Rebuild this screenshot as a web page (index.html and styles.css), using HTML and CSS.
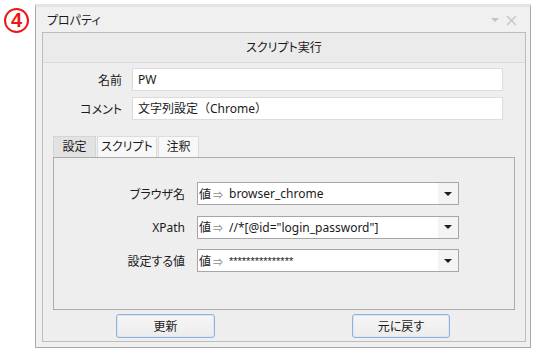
FILE: index.html
```html
<!DOCTYPE html>
<html lang="ja">
<head>
<meta charset="UTF-8">
<title>プロパティ</title>
<link rel="stylesheet" href="styles.css">
</head>
<body>
<div class="page">
  <div class="badge">4</div>

  <div class="dialog">
    <div class="titlebar">
      <span class="title">プロパティ</span>
      <span class="tb-icons">
        <svg width="8" height="6" viewBox="0 0 8 6"><path d="M0 1h8L4 5z" fill="#c4c4c4"/></svg>
        <svg width="11" height="11" viewBox="0 0 11 11"><path d="M1 1l9 9M10 1l-9 9" stroke="#c4c4c4" stroke-width="1.3"/></svg>
      </span>
    </div>

    <div class="panel">
      <div class="panel-head">スクリプト実行</div>

      <div class="fields">
        <div class="field-row">
          <label>名前</label>
          <div class="textbox">PW</div>
        </div>
        <div class="field-row">
          <label>コメント</label>
          <div class="textbox">文字列設定（Chrome）</div>
        </div>
      </div>

      <div class="tabs">
        <div class="tab tab-active">設定</div>
        <div class="tab tab-script">スクリプト</div>
        <div class="tab tab-note">注釈</div>
      </div>

      <div class="tab-panel">
        <div class="param-row">
          <span class="param-label">ブラウザ名</span>
          <div class="combo">
            <span class="combo-kind">値<span class="arrow">⇒</span></span>
            <span class="combo-value">browser_chrome</span>
            <span class="combo-drop"><i></i></span>
          </div>
        </div>
        <div class="param-row">
          <span class="param-label">XPath</span>
          <div class="combo">
            <span class="combo-kind">値<span class="arrow">⇒</span></span>
            <span class="combo-value">//*[@id="login_password"]</span>
            <span class="combo-drop"><i></i></span>
          </div>
        </div>
        <div class="param-row">
          <span class="param-label">設定する値</span>
          <div class="combo">
            <span class="combo-kind">値<span class="arrow">⇒</span></span>
            <span class="combo-value masked">***************</span>
            <span class="combo-drop"><i></i></span>
          </div>
        </div>
      </div>

      <div class="buttons">
        <button type="button" class="btn btn-update">更新</button>
        <button type="button" class="btn btn-revert">元に戻す</button>
      </div>
    </div>
  </div>
</div>
</body>
</html>
```

FILE: styles.css
```css
body {
    margin: 0;
    background-color: #ffffff;
    font-family: "Noto Sans", "Noto Sans CJK JP", sans-serif;
    font-size: 12px;
    color: #1a1a1a;
    font-feature-settings: "palt";
}

.page {
    display: flex;
    align-items: flex-start;
    padding: 4px 0 0 4px;
    width: 537px;
    height: 356px;
    box-sizing: border-box;
    overflow: hidden;
}

/* 注記の丸数字 */
.badge {
    width: 25px;
    height: 25px;
    margin-top: 4px;
    margin-right: 6px;
    box-sizing: border-box;
    border: 2px solid #f01414;
    border-radius: 50%;
    color: #f01414;
    font-family: "Liberation Sans", sans-serif;
    font-weight: bold;
    font-size: 20px;
    line-height: 21px;
    text-align: center;
}

.dialog {
    width: 496px;
    height: 344px;
    box-sizing: border-box;
    background-color: #f0f0f0;
    border: 1px solid #a8a8a8;
    border-top: 3px solid #e4e4e4;
    padding: 0 4px 5px 6px;
}

.titlebar {
    height: 25px;
    display: flex;
    align-items: center;
    justify-content: space-between;
    padding: 1px 9px 0 5px;
    box-sizing: border-box;
}

.tb-icons {
    display: flex;
    align-items: center;
    gap: 7px;
}

.panel {
    height: 310px;
    box-sizing: border-box;
    border: 1px solid #bdbdbd;
    background-color: #eeeeee;
    display: flex;
    flex-direction: column;
}

.panel-head {
    height: 30px;
    box-sizing: border-box;
    border-bottom: 1px solid #dadada;
    background-color: #ebebeb;
    display: flex;
    align-items: center;
    justify-content: center;
    padding-bottom: 1px;
}

.fields {
    margin-top: 5px;
    display: flex;
    flex-direction: column;
    gap: 6px;
}

.field-row {
    display: flex;
    align-items: center;
    gap: 10px;
}

.field-row label {
    width: 79px;
    text-align: right;
}

.textbox {
    width: 371px;
    height: 23px;
    box-sizing: border-box;
    background-color: #ffffff;
    border: 1px solid #dcdcdc;
    padding-left: 5px;
    line-height: 21px;
    font-feature-settings: normal;
}

.tabs {
    margin: 16px 0 0 10px;
    height: 21px;
    display: flex;
    gap: 1px;
}

.tab {
    height: 21px;
    box-sizing: border-box;
    border: 1px solid #dcdcdc;
    border-bottom: none;
    background-color: #f8f8f8;
    text-align: center;
    line-height: 20px;
}

.tab-active {
    width: 43px;
    background-color: #e2e2e2;
    border-color: #d4d4d4;
}

.tab-script {
    width: 60px;
}

.tab-note {
    width: 41px;
}

.tab-panel {
    margin: 0 10px;
    height: 153px;
    box-sizing: border-box;
    border: 1px solid #acacac;
    background-color: #eeeeee;
    padding-top: 24px;
    display: flex;
    flex-direction: column;
    gap: 10.5px;
}

.param-row {
    display: flex;
    align-items: center;
    gap: 12px;
}

.param-label {
    width: 131px;
    text-align: right;
}

.combo {
    width: 262px;
    height: 23px;
    box-sizing: border-box;
    background-color: #ffffff;
    border: 1px solid #a6a6a6;
    display: flex;
    align-items: center;
    padding-left: 1px;
}

.combo-kind {
    width: 30px;
    flex-shrink: 0;
}

.combo-kind .arrow {
    color: #8a8a8a;
    font-size: 10px;
    margin-left: 2px;
}

.combo-value {
    flex: 1;
    white-space: nowrap;
    overflow: hidden;
}

.masked {
    font-family: "Liberation Sans", sans-serif;
    font-size: 11px;
}

.combo-drop {
    width: 20px;
    height: 21px;
    background-color: #f4f4f4;
    display: flex;
    align-items: center;
    justify-content: center;
}

.combo-drop i {
    width: 0;
    height: 0;
    border-left: 4px solid transparent;
    border-right: 4px solid transparent;
    border-top: 4px solid #1e1e1e;
}

.buttons {
    margin-top: 4px;
    padding: 0 75px 0 73px;
    display: flex;
    justify-content: space-between;
}

.btn {
    height: 24px;
    box-sizing: border-box;
    border: 1px solid #8fb2d8;
    border-radius: 3px;
    background: linear-gradient(#f6f6f6, #ececec);
    box-shadow: 0 0 0 1px #dbe7f3 inset;
    font-family: inherit;
    font-size: 12px;
    color: #1a1a1a;
    font-feature-settings: "palt";
    padding: 0;
}

.btn-update {
    width: 99px;
}

.btn-revert {
    width: 98px;
}
```
